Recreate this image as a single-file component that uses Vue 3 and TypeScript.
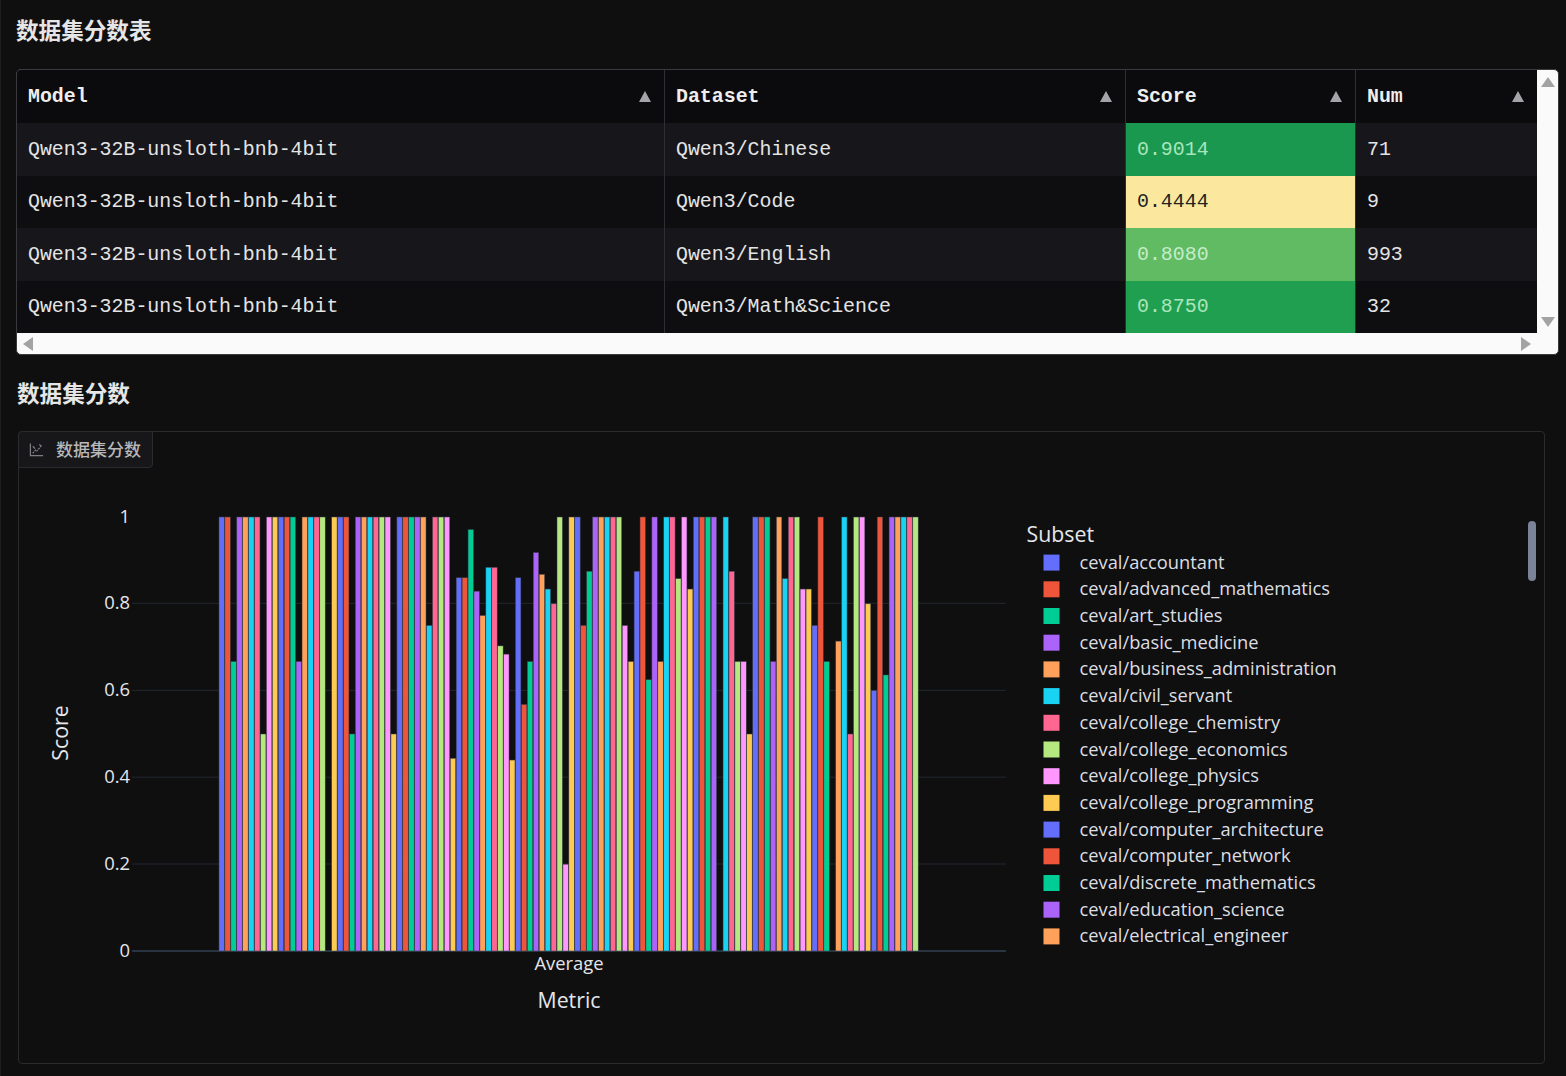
<script setup lang="ts">
const rows = [
  { model: 'Qwen3-32B-unsloth-bnb-4bit', dataset: 'Qwen3/Chinese', score: '0.9014', tone: 'deep', num: '71' },
  { model: 'Qwen3-32B-unsloth-bnb-4bit', dataset: 'Qwen3/Code', score: '0.4444', tone: 'pale', num: '9' },
  { model: 'Qwen3-32B-unsloth-bnb-4bit', dataset: 'Qwen3/English', score: '0.8080', tone: 'light', num: '993' },
  { model: 'Qwen3-32B-unsloth-bnb-4bit', dataset: 'Qwen3/Math&Science', score: '0.8750', tone: 'mid', num: '32' },
]
const headers = ['Model', 'Dataset', 'Score', 'Num']

const palette = ['#636efa', '#ef553b', '#00cc96', '#ab63fa', '#ffa15a', '#19d3f3', '#ff6692', '#b6e880', '#ff97ff', '#fecb52']
const scores = [
  1, 1, 0.667, 1, 1, 1, 1, 0.5, 1, 1,
  1, 1, 1, 0.667, 1, 1, 1, 1, 0, 1,
  1, 1, 0.5, 1, 1, 1, 1, 1, 1, 0.5,
  1, 1, 1, 1, 1, 0.75, 1, 1, 1, 0.444,
  0.86, 0.86, 0.971, 0.829, 0.773, 0.884, 0.884, 0.703, 0.684, 0.44,
  0.86, 0.568, 0.667, 0.918, 0.868, 0.834, 0.8, 1, 0.2, 1,
  1, 0.75, 0.875, 1, 1, 1, 1, 1, 0.75, 0.667,
  0.875, 1, 0.625, 1, 0.667, 1, 1, 0.858, 1, 0.834,
  1, 1, 1, 1, 0, 1, 0.875, 0.667, 0.667, 0.5,
  1, 1, 1, 0.667, 1, 0.858, 1, 1, 0.834, 0.834,
  0.75, 1, 0.667, 0, 0.714, 1, 0.5, 1, 1, 0.8,
  0.6, 1, 0.636, 1, 1, 1, 1, 1,
]
const zeroY = 951
const plotH = 434
const bars = scores
  .map((s, i) => ({ x: 219 + 5.93 * i, y: zeroY - s * plotH, h: s * plotH, fill: palette[i % 10], s }))
  .filter((b) => b.s > 0)

const ticks = [
  { label: '1', y: 517 },
  { label: '0.8', y: 603.3 },
  { label: '0.6', y: 690.4 },
  { label: '0.4', y: 777.2 },
  { label: '0.2', y: 864 },
  { label: '0', y: 951 },
]
const legendNames = [
  'accountant', 'advanced_mathematics', 'art_studies', 'basic_medicine', 'business_administration',
  'civil_servant', 'college_chemistry', 'college_economics', 'college_physics', 'college_programming',
  'computer_architecture', 'computer_network', 'discrete_mathematics', 'education_science', 'electrical_engineer',
]
const legend = legendNames.map((n, i) => ({
  name: 'ceval/' + n,
  y: 562.6 + i * 26.7,
  fill: palette[i % 10],
}))
</script>

<template>
  <div class="page">
    <h2 class="title">数据集分数表</h2>
    <div class="table-wrap">
      <div class="table-body">
        <div class="table-main">
          <div class="row head">
            <div v-for="h in headers" :key="h" class="cell">
              <span>{{ h }}</span>
              <i class="sort"></i>
            </div>
          </div>
          <div v-for="(r, i) in rows" :key="r.dataset" class="row" :class="i % 2 === 0 ? 'odd' : 'even'">
            <div class="cell">{{ r.model }}</div>
            <div class="cell">{{ r.dataset }}</div>
            <div class="cell" :class="r.tone">{{ r.score }}</div>
            <div class="cell">{{ r.num }}</div>
          </div>
        </div>
        <div class="vbar">
          <i class="arrow up"></i>
          <i class="arrow down"></i>
        </div>
      </div>
      <div class="hbar">
        <i class="arrow left"></i>
        <i class="arrow right"></i>
      </div>
    </div>

    <h2 class="title second">数据集分数</h2>
    <div class="panel">
      <div class="tab">
        <svg class="tab-icon" viewBox="0 0 16 16" fill="none" stroke="currentColor" stroke-width="1.3">
          <path d="M1.5 1.5V14.5H15" />
          <path d="M4 12L8 7.5" stroke-dasharray="2 1" />
          <path d="M8 10L14 3" stroke-dasharray="2 1" />
          <path d="M4 4.5L6.5 7M11 2.5L13 4.5" />
        </svg>
        <span>数据集分数</span>
      </div>
      <svg class="plot" viewBox="19 432 1525 631" width="1525" height="631">
        <g stroke="#22272e" stroke-width="1">
          <line v-for="t in ticks.slice(1, 5)" :key="t.label" x1="132" x2="1006" :y1="t.y" :y2="t.y" />
        </g>
        <line x1="132" x2="1006" :y1="zeroY" :y2="zeroY" stroke="#283442" stroke-width="2" />
        <rect
          v-for="b in bars"
          :key="b.x"
          :x="b.x"
          :y="b.y"
          width="5.4"
          :height="b.h"
          :fill="b.fill"
          stroke="#3a3f4a"
          stroke-width="0.5"
        />
        <text v-for="t in ticks" :key="t.label" class="axis" x="130" :y="t.y + 6" text-anchor="end">{{ t.label }}</text>
        <text class="axis" x="569" y="970" text-anchor="middle">Average</text>
        <text class="axis-title" x="569" y="1008" text-anchor="middle">Metric</text>
        <text class="axis-title" transform="translate(68 733) rotate(-90)" text-anchor="middle">Score</text>
        <text class="axis-title" x="1026.5" y="541.5">Subset</text>
        <g v-for="l in legend" :key="l.name">
          <rect x="1043.5" :y="l.y - 8" width="16" height="16" :fill="l.fill" />
          <text class="legend-text" x="1079.5" :y="l.y + 6">{{ l.name }}</text>
        </g>
        <rect x="1528" y="521" width="8" height="60" rx="4" fill="#7b8398" />
      </svg>
    </div>
  </div>
</template>

<style>
html,
body {
  background: #0f0f10;
}
</style>

<style scoped>
.page {
  box-sizing: border-box;
  height: 1076px;
  overflow: hidden;
  padding: 12px 7px 0 15px;
  border-left: 1px solid #1d1d1f;
  background: #0f0f10;
  font-family: "Noto Sans CJK SC", "Noto Sans", sans-serif;
}
.title {
  margin: 0 0 21px 0;
  font-size: 22.6px;
  line-height: 36px;
  font-weight: 700;
  color: #e6e6e6;
}
.title.second {
  margin: 20px 0 20px 1px;
}
.table-wrap {
  box-sizing: border-box;
  height: 286px;
  border: 1px solid #3a3a3e;
  border-radius: 5px;
  background: #fafafa;
  overflow: hidden;
  font-family: "Liberation Mono", "DejaVu Sans Mono", monospace;
  font-size: 19.9px;
  color: #e4e4e4;
}
.table-body {
  display: flex;
  height: 263px;
}
.table-main {
  width: 1520px;
  background: #0e0e10;
}
.row {
  display: grid;
  grid-template-columns: 648px 461px 230px 181px;
  height: 52.5px;
}
.row.head {
  height: 53px;
  background: #0b0b0d;
  font-weight: 700;
  color: #eeeeee;
}
.row.odd {
  background: #16161b;
}
.row.even {
  background: #0e0e10;
}
.cell {
  display: flex;
  align-items: center;
  justify-content: space-between;
  padding: 0 13px 0 11px;
  border-right: 1px solid #2f2f33;
}
.cell:last-child {
  border-right: none;
}
.sort {
  width: 0;
  height: 0;
  border-left: 6.5px solid transparent;
  border-right: 6.5px solid transparent;
  border-bottom: 11px solid #a5a5a9;
}
.deep {
  background: #1a9850;
  color: #a9e6bd;
}
.pale {
  background: #fbe89e;
  color: #232323;
}
.light {
  background: #60bb63;
  color: #c5eccb;
}
.mid {
  background: #219f50;
  color: #a9e6bd;
}
.vbar {
  flex: 1;
  display: flex;
  flex-direction: column;
  align-items: center;
  justify-content: space-between;
  padding: 7px 0 6px;
}
.hbar {
  display: flex;
  align-items: center;
  justify-content: space-between;
  height: 21px;
  padding: 0 27px 0 6px;
}
.arrow {
  width: 0;
  height: 0;
}
.arrow.up {
  border-left: 7px solid transparent;
  border-right: 7px solid transparent;
  border-bottom: 10px solid #a3a3a3;
}
.arrow.down {
  border-left: 7px solid transparent;
  border-right: 7px solid transparent;
  border-top: 10px solid #a3a3a3;
}
.arrow.left {
  border-top: 7px solid transparent;
  border-bottom: 7px solid transparent;
  border-right: 10px solid #a3a3a3;
}
.arrow.right {
  border-top: 7px solid transparent;
  border-bottom: 7px solid transparent;
  border-left: 10px solid #a3a3a3;
}
.panel {
  position: relative;
  box-sizing: border-box;
  width: 1527px;
  height: 633px;
  margin-left: 2px;
  border: 1px solid #2b2b2f;
  border-radius: 4px;
}
.tab {
  position: absolute;
  top: -1px;
  left: -1px;
  display: flex;
  align-items: center;
  gap: 12px;
  box-sizing: border-box;
  width: 135px;
  height: 37px;
  padding: 0 0 3px 10px;
  border: 1px solid #2b2b2f;
  border-radius: 4px 0 4px 0;
  background: #17171a;
  color: #b8b8b8;
  font-size: 17px;
  font-weight: 500;
}
.tab-icon {
  width: 15px;
  height: 15px;
  color: #7f7f83;
  flex: none;
  margin-top: 3px;
}
.plot {
  display: block;
}
.axis {
  font-family: "Open Sans", sans-serif;
  font-size: 18.4px;
  fill: #e4e6ea;
}
.axis-title {
  font-family: "Open Sans", sans-serif;
  font-size: 21.3px;
  fill: #e4e6ea;
}
.legend-text {
  font-family: "Open Sans", sans-serif;
  font-size: 18.3px;
  fill: #dcdee2;
}
</style>
